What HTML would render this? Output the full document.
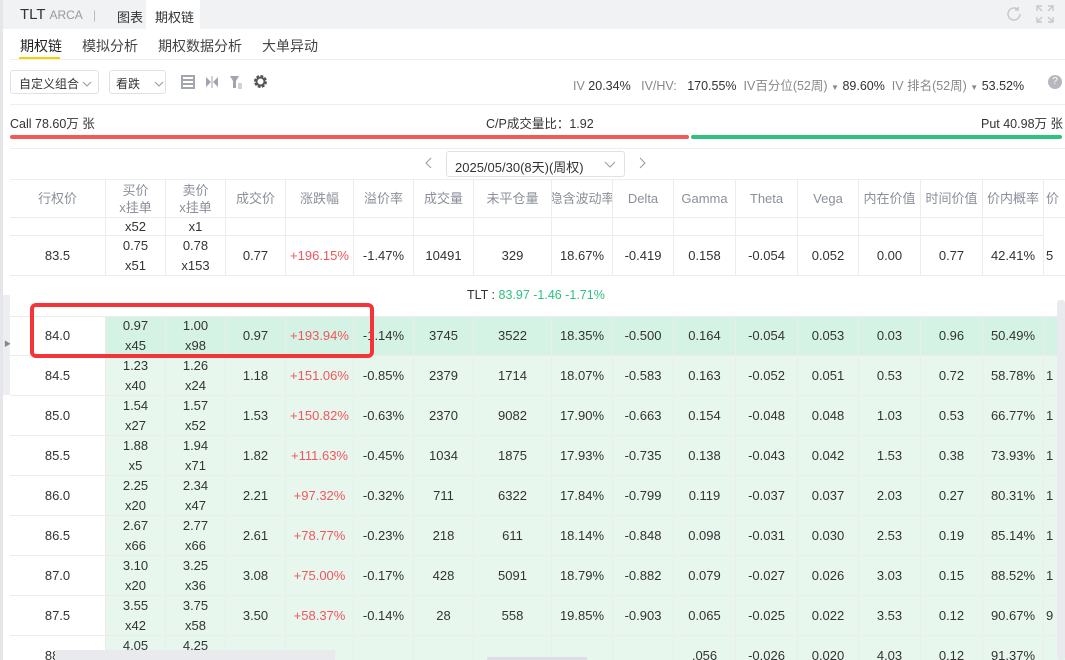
<!DOCTYPE html>
<html><head><meta charset="utf-8"><style>
*{box-sizing:border-box;margin:0;padding:0}
html,body{width:1065px;height:660px;overflow:hidden}
body{background:#fff;font-family:"Liberation Sans","Noto Sans CJK SC",sans-serif;color:#333;position:relative}
.a{position:absolute}
.row{position:absolute;left:10px;height:40px;display:flex;border-bottom:1px solid #ececec;font-size:13px;color:#333}
.row div{height:100%;display:flex;align-items:center;justify-content:center;text-align:center;border-right:1px solid #ececec;line-height:20px;flex:none;white-space:nowrap;overflow:hidden}
.g div{background:#e7f7ee}
.g div:first-child{background:#fff}
.atm div{background:#d5f3e4}
.atm div:first-child{background:#fff}
.r{color:#f0565d}
.hd div{color:#8a8f99;line-height:17px}
.x{justify-content:flex-start!important;padding-left:2px}
</style></head><body>
<div class="a" style="left:0;top:0;width:1065px;height:29px;background:#f1f2f4"></div>
<div class="a" style="left:0;top:0;width:3px;height:660px;background:#e4e6ea"></div>
<div class="a" style="left:20px;top:6px;font-size:15px;color:#333;white-space:nowrap">TLT <span style="font-size:12px;color:#999">ARCA</span> <span style="color:#bbb;font-size:12px;margin-left:6px">|</span></div>
<div class="a" style="left:117px;top:7px;font-size:13px">图表</div>
<div class="a" style="left:146px;top:0;width:54px;height:29px;background:#fff"></div>
<div class="a" style="left:155px;top:7px;font-size:13px">期权链</div>
<svg class="a" style="left:1005px;top:5px" width="18" height="18" viewBox="0 0 18 18"><path d="M15 9a6 6 0 1 1-2-4.5M13 2v3h-3" fill="none" stroke="#c8c8c8" stroke-width="1.5"/></svg>
<svg class="a" style="left:1036px;top:5px" width="18" height="18" viewBox="0 0 18 18"><path d="M1 6V1h5M12 1h5v5M17 12v5h-5M6 17H1v-5M1 1l5 5M17 1l-5 5M17 17l-5-5M1 17l5-5" fill="none" stroke="#c8c8c8" stroke-width="1.4"/></svg>
<div class="a" style="left:20px;top:36px;font-size:14px;color:#222">期权链</div>
<div class="a" style="left:19px;top:57px;width:41px;height:2px;background:#f5d000"></div>
<div class="a" style="left:82px;top:36px;font-size:14px;color:#444">模拟分析</div>
<div class="a" style="left:158px;top:36px;font-size:14px;color:#444">期权数据分析</div>
<div class="a" style="left:262px;top:36px;font-size:14px;color:#444">大单异动</div>
<div class="a" style="left:10px;top:59px;width:1055px;height:1px;background:#eceef1"></div>
<div class="a" style="left:10px;top:70px;width:89px;height:24px;border:1px solid #dfe1e5;border-radius:3px;font-size:12px;padding:4px 8px;white-space:nowrap">自定义组合<svg width="10" height="8" style="margin-left:3px"><path d="M1 2l4 4 4-4" fill="none" stroke="#999"/></svg></div>
<div class="a" style="left:109px;top:70px;width:57px;height:24px;border:1px solid #dfe1e5;border-radius:3px;font-size:12px;padding:4px 6px;white-space:nowrap">看跌<svg width="10" height="8" style="margin-left:14px"><path d="M1 2l4 4 4-4" fill="none" stroke="#999"/></svg></div>
<svg class="a" style="left:181px;top:75px" width="14" height="14"><rect x="1" y="1" width="12" height="12" fill="none" stroke="#a0a5ae" stroke-width="2"/><path d="M1 5h12M1 9h12" stroke="#a0a5ae" stroke-width="2"/></svg>
<svg class="a" style="left:205px;top:75px" width="14" height="14"><path d="M1 2l5 5-5 5zM13 2l-5 5 5 5z" fill="#a0a5ae"/><path d="M7 1v12" stroke="#a0a5ae"/></svg>
<svg class="a" style="left:229px;top:75px" width="14" height="14"><path d="M1 1h9L7 6v7H4V6z" fill="#a0a5ae"/><path d="M9 9h4M9 11h4M9 13h4" stroke="#a0a5ae"/></svg>
<svg class="a" style="left:252px;top:73px" width="17" height="17" viewBox="0 0 17 17"><circle cx="8.5" cy="8.5" r="5" fill="none" stroke="#555" stroke-width="3" stroke-dasharray="2.6 1.3"/><circle cx="8.5" cy="8.5" r="4" fill="none" stroke="#555" stroke-width="2"/></svg>
<div class="a" style="left:573px;top:75px;font-size:12.5px;color:#888;white-space:nowrap">IV <span style="color:#333">20.34%</span>&nbsp;&nbsp; IV/HV:&nbsp;&nbsp; <span style="color:#333">170.55%</span>&nbsp; IV百分位(52周) <span style="font-size:8px">▼</span> <span style="color:#333">89.60%</span>&nbsp; IV 排名(52周) <span style="font-size:8px">▼</span> <span style="color:#333">53.52%</span></div>
<div class="a" style="left:1048px;top:75px;width:14px;height:14px;border-radius:50%;background:#b5b8bd;color:#fff;font-size:10px;text-align:center;line-height:14px">?</div>
<div class="a" style="left:10px;top:104px;width:1055px;height:1px;background:#eceef1"></div>
<div class="a" style="left:10px;top:113px;font-size:12.5px">Call 78.60万 张</div>
<div class="a" style="left:486px;top:113px;font-size:12.5px">C/P成交量比：1.92</div>
<div class="a" style="left:981px;top:113px;font-size:12.5px">Put 40.98万 张</div>
<div class="a" style="left:10px;top:135px;width:679px;height:4px;background:#f25a5a;border-radius:2px"></div>
<div class="a" style="left:691px;top:135px;width:371px;height:4px;background:#2ec27e;border-radius:2px"></div>
<div class="a" style="left:10px;top:148px;width:1055px;height:1px;background:#eceef1"></div>
<svg class="a" style="left:425px;top:157px" width="8" height="12"><path d="M6 1L1 6l5 5" fill="none" stroke="#999"/></svg>
<div class="a" style="left:446px;top:151px;width:179px;height:26px;border:1px solid #dfe1e5;border-radius:3px;font-size:13px;padding:5px 8px;white-space:nowrap">2025/05/30(8天)(周权)<svg width="12" height="8" style="position:absolute;right:8px;top:9px"><path d="M1 1l5 5 5-5" fill="none" stroke="#999"/></svg></div>
<svg class="a" style="left:638px;top:157px" width="8" height="12"><path d="M2 1l5 5-5 5" fill="none" stroke="#999"/></svg>
<div class="a" style="left:10px;top:179px;width:1055px;height:1px;background:#eceef1"></div>

<div class="row hd" style="top:180px;height:38px">
<div style="width:96px">行权价</div><div style="width:60px"><span>买价<br>x挂单</span></div><div style="width:60px"><span>卖价<br>x挂单</span></div><div style="width:60px">成交价</div><div style="width:68px">涨跌幅</div><div style="width:60px">溢价率</div><div style="width:60px">成交量</div><div style="width:78px">未平仓量</div><div style="width:61px">隐含波动率</div><div style="width:61px">Delta</div><div style="width:62px">Gamma</div><div style="width:62px">Theta</div><div style="width:61px">Vega</div><div style="width:62px">内在价值</div><div style="width:62px">时间价值</div><div style="width:61px">价内概率</div><div style="width:30px;border:none" class="x">价</div>
</div>
<div class="row" style="top:218px;height:18px">
<div style="width:96px"></div><div style="width:60px">x52</div><div style="width:60px">x1</div><div style="width:60px"></div><div style="width:68px"></div><div style="width:60px"></div><div style="width:60px"></div><div style="width:78px"></div><div style="width:61px"></div><div style="width:61px"></div><div style="width:62px"></div><div style="width:62px"></div><div style="width:61px"></div><div style="width:62px"></div><div style="width:62px"></div><div style="width:61px"></div>
</div>
<div class="row" style="top:236px">
<div style="width:96px">83.5</div><div style="width:60px"><span>0.75<br>x51</span></div><div style="width:60px"><span>0.78<br>x153</span></div><div style="width:60px">0.77</div><div style="width:68px" class="r">+196.15%</div><div style="width:60px">-1.47%</div><div style="width:60px">10491</div><div style="width:78px">329</div><div style="width:61px">18.67%</div><div style="width:61px">-0.419</div><div style="width:62px">0.158</div><div style="width:62px">-0.054</div><div style="width:61px">0.052</div><div style="width:62px">0.00</div><div style="width:62px">0.77</div><div style="width:61px">42.41%</div><div style="width:30px;border:none" class="x">5</div>
</div>
<div class="a" style="left:467px;top:288px;font-size:12.5px">TLT : <span style="color:#2ec27e">83.97 -1.46 -1.71%</span></div>
<div class="row atm" style="top:316px;border-top:1px solid #ececec">
<div style="width:96px">84.0</div><div style="width:60px"><span>0.97<br>x45</span></div><div style="width:60px"><span>1.00<br>x98</span></div><div style="width:60px">0.97</div><div style="width:68px" class="r">+193.94%</div><div style="width:60px">-1.14%</div><div style="width:60px">3745</div><div style="width:78px">3522</div><div style="width:61px">18.35%</div><div style="width:61px">-0.500</div><div style="width:62px">0.164</div><div style="width:62px">-0.054</div><div style="width:61px">0.053</div><div style="width:62px">0.03</div><div style="width:62px">0.96</div><div style="width:61px">50.49%</div><div style="width:30px;border:none"></div>
</div>
<div class="row g" style="top:356px">
<div style="width:96px">84.5</div><div style="width:60px"><span>1.23<br>x40</span></div><div style="width:60px"><span>1.26<br>x24</span></div><div style="width:60px">1.18</div><div style="width:68px" class="r">+151.06%</div><div style="width:60px">-0.85%</div><div style="width:60px">2379</div><div style="width:78px">1714</div><div style="width:61px">18.07%</div><div style="width:61px">-0.583</div><div style="width:62px">0.163</div><div style="width:62px">-0.052</div><div style="width:61px">0.051</div><div style="width:62px">0.53</div><div style="width:62px">0.72</div><div style="width:61px">58.78%</div><div style="width:30px;border:none" class="x">1</div>
</div>
<div class="row g" style="top:396px">
<div style="width:96px">85.0</div><div style="width:60px"><span>1.54<br>x27</span></div><div style="width:60px"><span>1.57<br>x52</span></div><div style="width:60px">1.53</div><div style="width:68px" class="r">+150.82%</div><div style="width:60px">-0.63%</div><div style="width:60px">2370</div><div style="width:78px">9082</div><div style="width:61px">17.90%</div><div style="width:61px">-0.663</div><div style="width:62px">0.154</div><div style="width:62px">-0.048</div><div style="width:61px">0.048</div><div style="width:62px">1.03</div><div style="width:62px">0.53</div><div style="width:61px">66.77%</div><div style="width:30px;border:none" class="x">1</div>
</div>
<div class="row g" style="top:436px">
<div style="width:96px">85.5</div><div style="width:60px"><span>1.88<br>x5</span></div><div style="width:60px"><span>1.94<br>x71</span></div><div style="width:60px">1.82</div><div style="width:68px" class="r">+111.63%</div><div style="width:60px">-0.45%</div><div style="width:60px">1034</div><div style="width:78px">1875</div><div style="width:61px">17.93%</div><div style="width:61px">-0.735</div><div style="width:62px">0.138</div><div style="width:62px">-0.043</div><div style="width:61px">0.042</div><div style="width:62px">1.53</div><div style="width:62px">0.38</div><div style="width:61px">73.93%</div><div style="width:30px;border:none" class="x">1</div>
</div>
<div class="row g" style="top:476px">
<div style="width:96px">86.0</div><div style="width:60px"><span>2.25<br>x20</span></div><div style="width:60px"><span>2.34<br>x47</span></div><div style="width:60px">2.21</div><div style="width:68px" class="r">+97.32%</div><div style="width:60px">-0.32%</div><div style="width:60px">711</div><div style="width:78px">6322</div><div style="width:61px">17.84%</div><div style="width:61px">-0.799</div><div style="width:62px">0.119</div><div style="width:62px">-0.037</div><div style="width:61px">0.037</div><div style="width:62px">2.03</div><div style="width:62px">0.27</div><div style="width:61px">80.31%</div><div style="width:30px;border:none" class="x">1</div>
</div>
<div class="row g" style="top:516px">
<div style="width:96px">86.5</div><div style="width:60px"><span>2.67<br>x66</span></div><div style="width:60px"><span>2.77<br>x66</span></div><div style="width:60px">2.61</div><div style="width:68px" class="r">+78.77%</div><div style="width:60px">-0.23%</div><div style="width:60px">218</div><div style="width:78px">611</div><div style="width:61px">18.14%</div><div style="width:61px">-0.848</div><div style="width:62px">0.098</div><div style="width:62px">-0.031</div><div style="width:61px">0.030</div><div style="width:62px">2.53</div><div style="width:62px">0.19</div><div style="width:61px">85.14%</div><div style="width:30px;border:none" class="x">1</div>
</div>
<div class="row g" style="top:556px">
<div style="width:96px">87.0</div><div style="width:60px"><span>3.10<br>x20</span></div><div style="width:60px"><span>3.25<br>x36</span></div><div style="width:60px">3.08</div><div style="width:68px" class="r">+75.00%</div><div style="width:60px">-0.17%</div><div style="width:60px">428</div><div style="width:78px">5091</div><div style="width:61px">18.79%</div><div style="width:61px">-0.882</div><div style="width:62px">0.079</div><div style="width:62px">-0.027</div><div style="width:61px">0.026</div><div style="width:62px">3.03</div><div style="width:62px">0.15</div><div style="width:61px">88.52%</div><div style="width:30px;border:none" class="x">1</div>
</div>
<div class="row g" style="top:596px">
<div style="width:96px">87.5</div><div style="width:60px"><span>3.55<br>x42</span></div><div style="width:60px"><span>3.75<br>x58</span></div><div style="width:60px">3.50</div><div style="width:68px" class="r">+58.37%</div><div style="width:60px">-0.14%</div><div style="width:60px">28</div><div style="width:78px">558</div><div style="width:61px">19.85%</div><div style="width:61px">-0.903</div><div style="width:62px">0.065</div><div style="width:62px">-0.025</div><div style="width:61px">0.022</div><div style="width:62px">3.53</div><div style="width:62px">0.12</div><div style="width:61px">90.67%</div><div style="width:30px;border:none" class="x">9</div>
</div>
<div class="row g" style="top:636px">
<div style="width:96px">88.0</div><div style="width:60px"><span>4.05<br>x</span></div><div style="width:60px"><span>4.25<br>x</span></div><div style="width:60px"></div><div style="width:68px"></div><div style="width:60px"></div><div style="width:60px"></div><div style="width:78px"></div><div style="width:61px"></div><div style="width:61px"></div><div style="width:62px">.056</div><div style="width:62px">-0.026</div><div style="width:61px">0.020</div><div style="width:62px">4.03</div><div style="width:62px">0.12</div><div style="width:61px">91.37%</div><div style="width:30px;border:none"></div>
</div>
<div class="a" style="left:55px;top:650px;width:280px;height:10px;background:#e8eaee"></div>
<div class="a" style="left:487px;top:657px;width:100px;height:3px;background:#dcdfe4"></div>
<div class="a" style="left:1057px;top:300px;width:8px;height:360px;background:#e8eaee;border-radius:3px"></div>
<div class="a" style="left:3px;top:295px;width:7px;height:100px;background:#eceef1"></div>
<div class="a" style="left:4px;top:339px;font-size:7px;color:#888">▶</div>
<div class="a" style="left:30px;top:303px;width:344px;height:55px;border:4px solid #f5343a;border-radius:6px"></div>
</body></html>
